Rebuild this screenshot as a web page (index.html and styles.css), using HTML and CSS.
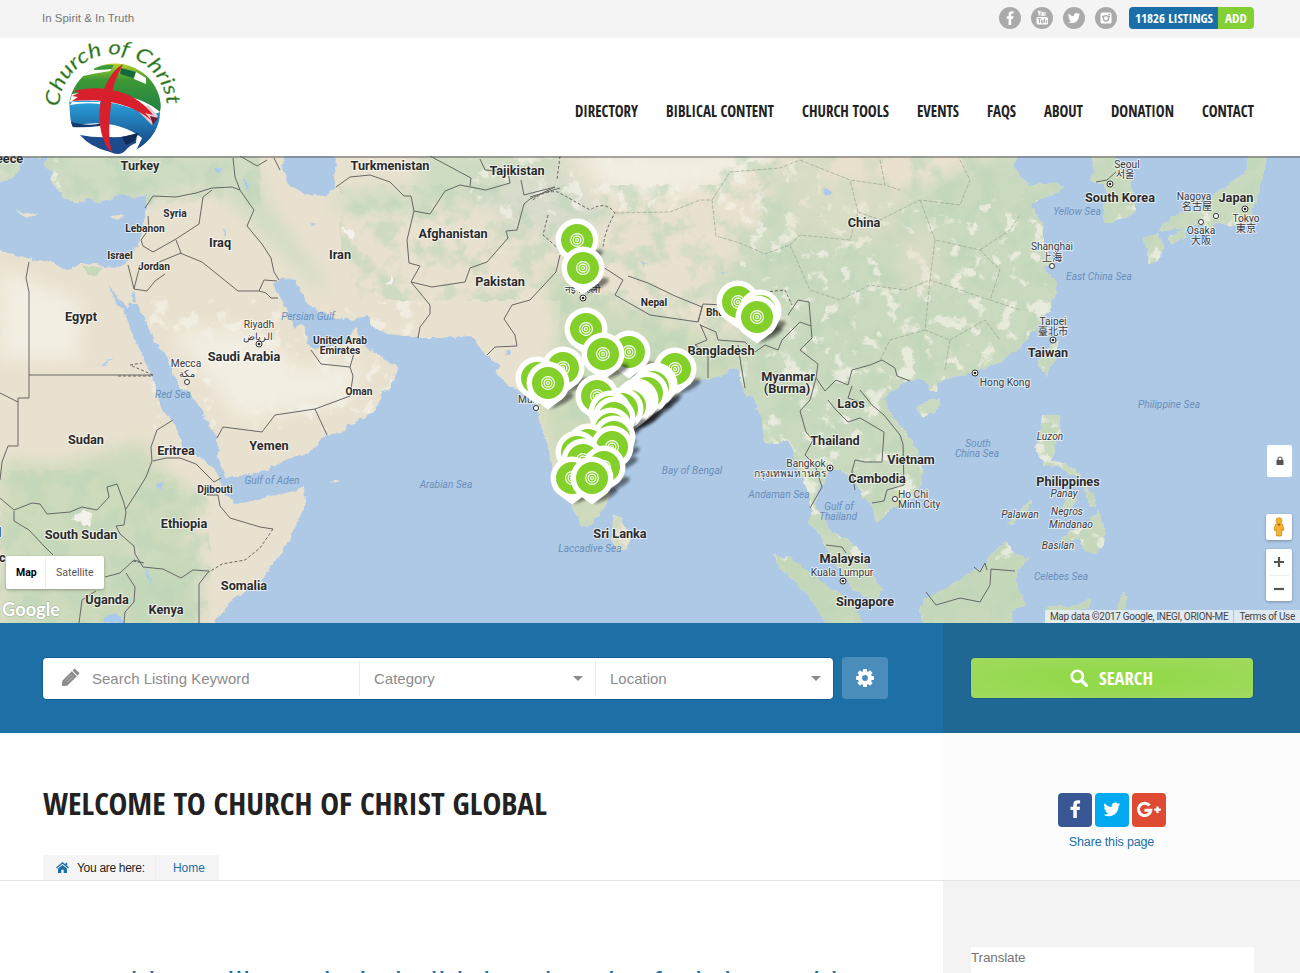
FILE: index.html
```html
<!DOCTYPE html>
<html lang="en">
<head>
<meta charset="utf-8">
<title>Church of Christ Global</title>
<link rel="stylesheet" href="styles.css">
</head>
<body>
<div class="topbar">
  <span class="tagline">In Spirit &amp; In Truth</span>
  <div class="topbar-right">
    <a class="social"><svg viewBox="0 0 22 22"><path d="M12.2 18v-6.3h2l.4-2.5h-2.4V7.8c0-.8.3-1.2 1.2-1.2h1.2V4.3c-3.2-.5-5 .4-5 3v1.9H7.700v2.500h1.900V18z"/></svg></a>
    <a class="social"><svg viewBox="0 0 22 22"><path d="M7 3.500l1.200 3v2.300M9.400 3.500L8.200 6.500M14 5v3.700M12.200 5v3.300h1.800" fill="none" stroke="#fff" stroke-width="1.100"/><rect x="10" y="5" width="1.500" height="3.800" rx=".7" fill="none" stroke="#fff"/><rect x="5.500" y="10" width="11.500" height="7.500" rx="1.500"/><path d="M7 11.700h3M8.500 11.700V16M10.500 12.700V16h1.500v-3.300M13.500 11.500V16M15.500 13v3" fill="none" stroke="#aaa"/></svg></a>
    <a class="social"><svg viewBox="0 0 22 22"><use href="#bird" transform="translate(4.800 4.800) scale(.52)"/></svg></a>
    <a class="social"><svg viewBox="0 0 22 22"><rect x="5.500" y="5.500" width="11" height="11" rx="1.500"/><path d="M7 9.500h2M13 9.500h2M13.500 7.300h1.800" stroke="#aaa" stroke-width="1.300"/><circle cx="11" cy="11.300" r="2.700" fill="#fff" stroke="#aaa" stroke-width="1.300"/></svg></a>
    <div class="pill">
      <a class="pill-count"><svg class="cond" width="79" height="22"><text x="0" y="15.500" textLength="78" lengthAdjust="spacingAndGlyphs">11826 LISTINGS</text></svg></a>
      <a class="pill-add"><svg class="cond" width="23" height="22"><text x="0" y="15.500" textLength="22" lengthAdjust="spacingAndGlyphs">ADD</text></svg></a>
    </div>
  </div>
</div>

<header class="header">
  <svg class="logo" viewBox="40 38 144 118" width="144" height="118">
    <defs>
      <clipPath id="globe"><ellipse cx="115" cy="109" rx="46" ry="45.500"/></clipPath>
      <linearGradient id="lg" x1="0" y1="0" x2="0" y2="1"><stop offset="0" stop-color="#c4d82b"/><stop offset=".35" stop-color="#3f9a35"/><stop offset="1" stop-color="#1f7f45"/></linearGradient>
      <linearGradient id="lb" x1="0" y1="0" x2="0" y2="1"><stop offset="0" stop-color="#2ba3dd"/><stop offset="1" stop-color="#153f7c"/></linearGradient>
      <path id="arcL" d="M59 107A54 55 0 0 1 167 112V130"/>
    </defs>
    <g clip-path="url(#globe)">
      <path d="M69 105C66 70 92 60 115 62C150 64 165 90 160 112C145 98 110 88 72 94z" fill="url(#lg)"/>
      <path d="M90 69Q100 64 114 66L110 71Q96 73 78 77z" fill="#fff"/>
      <path d="M94 68Q104 64 114 65L112 69Q104 70 94 70z" fill="#3c9a3a"/>
      <path d="M121 68L136 72L133 78L120 74z" fill="#14693c"/><path d="M136 72L146 78V84L134 79z" fill="#fff"/>
      <path d="M69 102Q110 96 150 116L160 112Q160 135 136 151L142 138Q115 117 71 126z" fill="url(#lb)"/>
      <path d="M71 122Q90 127 102 123L100 126Q84 128 72 127z" fill="#163a6c"/>
      <path d="M72 102L100 102V104Q85 102 70 105z" fill="#fff"/>
      <path d="M80 135Q95 138 110 137Q124 138 137 133L136 143Q130 145 126 150Q120 157 110 152Q90 147 80 135z" fill="#1c4a8b"/>
      <path d="M122 137L139 133L134 141L126 145z" fill="#102b55"/>
      <path d="M148 105L158 116L152 125L139 112z" fill="#eac9cd"/><path d="M150 116L158 118L153 125z" fill="#6b1f33"/>
    </g>
    <path d="M123 64C115 80 111 90 111 104C109 125 108 139 112 152C101 145 97 117 101 101C104 85 112 70 123 64z" fill="#d81f2c"/>
    <path d="M74 91C100 84 135 90 153 115L145 113L154 123C135 104 104 98 72 101L78 97L72 96L79 93z" fill="#d81f2c"/>
    <text class="logo-text"><textPath href="#arcL" textLength="164" lengthAdjust="spacingAndGlyphs">Church of Christ</textPath></text>
  </svg>
  <nav class="nav">
    <a><svg class="cond" width="63" height="22"><text x="0" y="16" textLength="63" lengthAdjust="spacingAndGlyphs">DIRECTORY</text></svg></a>
    <a><svg class="cond" width="108" height="22"><text x="0" y="16" textLength="108" lengthAdjust="spacingAndGlyphs">BIBLICAL CONTENT</text></svg></a>
    <a><svg class="cond" width="87" height="22"><text x="0" y="16" textLength="87" lengthAdjust="spacingAndGlyphs">CHURCH TOOLS</text></svg></a>
    <a><svg class="cond" width="42" height="22"><text x="0" y="16" textLength="42" lengthAdjust="spacingAndGlyphs">EVENTS</text></svg></a>
    <a><svg class="cond" width="29" height="22"><text x="0" y="16" textLength="29" lengthAdjust="spacingAndGlyphs">FAQS</text></svg></a>
    <a><svg class="cond" width="39" height="22"><text x="0" y="16" textLength="39" lengthAdjust="spacingAndGlyphs">ABOUT</text></svg></a>
    <a><svg class="cond" width="63" height="22"><text x="0" y="16" textLength="63" lengthAdjust="spacingAndGlyphs">DONATION</text></svg></a>
    <a><svg class="cond" width="52" height="22"><text x="0" y="16" textLength="52" lengthAdjust="spacingAndGlyphs">CONTACT</text></svg></a>
  </nav>
</header>

<section class="map">
<svg class="map-canvas" viewBox="0 156 1300 467" width="1300" height="467">
  <defs>
    <path id="bird" d="M24 4.600c-.9.400-1.800.7-2.800.8 1-.6 1.800-1.600 2.200-2.700-1 .6-2 1-3.100 1.200a4.900 4.900 0 0 0-8.400 4.500C7.700 8.200 4.100 6.300 1.700 3.100a4.900 4.900 0 0 0 1.500 6.600c-.8 0-1.600-.2-2.200-.6v.1c0 2.400 1.700 4.400 3.900 4.800-.7.200-1.500.2-2.200.1.600 2 2.400 3.400 4.600 3.400A9.900 9.900 0 0 1 0 19.500 13.900 13.900 0 0 0 7.500 21.700c9.100 0 14.300-7.700 14-14.600 1-.7 1.800-1.600 2.500-2.500z"/>
    <g id="pin">
      <path d="M1 26L18 10Q28 9 25 14Q17 22 1 26z" fill="#111" opacity=".5" filter="url(#soft)"/>
      <path d="M0 26.500L-15 15.500A21.500 21.500 0 1 1 15 15.500z" fill="#fff"/>
      <circle r="16" fill="#84d02a"/>
      <g fill="none" stroke="#fff" stroke-width="1.100"><circle r="6.400"/><circle r="3.900"/><circle r="1.500"/></g>
    </g>
    <filter id="soft" x="-50%" y="-50%" width="200%" height="200%"><feGaussianBlur stdDeviation="1.500"/></filter>
    <filter id="blur"><feGaussianBlur stdDeviation="9"/></filter>
    <filter id="rough"><feTurbulence type="fractalNoise" baseFrequency=".14" numOctaves="3" seed="4"/><feDisplacementMap in="SourceGraphic" scale="6" xChannelSelector="R" yChannelSelector="G"/></filter>
    <filter id="mottle" x="0" y="0" width="100%" height="100%" color-interpolation-filters="sRGB"><feTurbulence type="fractalNoise" baseFrequency=".045" numOctaves="4" seed="7"/><feColorMatrix values="0 0 0 0 .75  0 0 0 0 .84  0 0 0 0 .73  5 0 0 0 -2.300" result="n"/><feComposite in="n" in2="SourceAlpha" operator="in"/></filter>
    <filter id="pale" x="0" y="0" width="100%" height="100%" color-interpolation-filters="sRGB"><feTurbulence type="fractalNoise" baseFrequency=".06" numOctaves="4" seed="21"/><feColorMatrix values="0 0 0 0 .95  0 0 0 0 .94  0 0 0 0 .90  9 0 0 0 -5.200" result="n"/><feComposite in="n" in2="SourceAlpha" operator="in"/></filter>
    <clipPath id="land"><path id="landshape" d="M-12 150H283L282 170L290 185L305 194L325 196L335 189L334 176L337 165L331 150H1020L1012 168L1020 176L1028 185L1045 183L1063 185L1060 191L1045 197L1030 205L1037 215L1044 225L1043 240L1047 252L1055 262L1043 268L1055 280L1057 292L1048 312L1033 332L1020 347L1000 362L985 368L960 376L937 381L936 392L930 390L928 382L917 379L903 383L890 392L885 399L889 412L902 428L916 447L922 463L922 483L913 497L893 507L877 523L875 513L871 503L863 497L857 485L850 478L840 470L830 468L825 480L818 490L815 503L822 515L828 528L838 536L848 540L857 548L864 560L872 575L882 590L876 601L865 597L850 586L838 567L827 550L820 533L808 523L811 510L807 490L797 467L793 450L787 439L777 444L765 443L762 422L755 400L743 390L741 376L735 367L722 375L708 379L695 382L683 390L670 400L655 412L640 425L625 433L614 440L612 455L614 470L611 490L607 503L600 514L592 523L583 527L575 513L571 500L562 485L553 467L547 445L539 420L535 400L533 388L520 391L508 386L496 372L500 366L487 356L480 347L470 336L440 338L417 338L390 334L374 328L367 316L352 320L336 319L318 311L305 300L295 280L283 278L273 285L280 298L288 312L295 329L302 324L306 330L307 344L312 348L327 347L342 345L354 331L357 327L359 335L366 347L381 356L398 368L389 389L382 393L376 409L366 417L351 424L345 431L320 438L317 447L287 461L262 471L240 477L225 477L218 457L217 438L209 425L200 407L190 393L178 385L172 370L168 358L155 342L145 321L137 304L130 304L128 308L119 299L108 283L115 300L125 314L136 343L145 361L153 378L158 397L161 409L174 422L178 432L183 446L201 458L216 471L221 484L226 494L234 503L250 502L267 497L290 492L305 487L306 502L297 525L283 550L260 583L233 600L208 630H-12V244L10 254L28 258L48 262L70 270L80 264L97 263L105 267L122 266L130 261L139 240L143 225L147 209L146 195L132 198L120 195L110 199L97 203L88 198L75 203L65 198L56 188L50 180L54 173L45 166L47 156L35 158L20 156L18 172L10 180L-12 182zM1090 150L1095 170L1090 180L1104 184L1108 196L1103 210L1104 224L1120 220L1135 213L1135 195L1129 180L1116 165L1114 150zM1250 150L1245 173L1228 186L1214 195L1206 208L1182 212L1163 224L1158 233L1180 229L1202 225L1211 230L1217 222L1230 226L1250 219L1257 200L1262 180L1269 150zM1143 238L1158 234L1164 246L1158 262L1147 264L1149 250zM1169 236L1186 228L1185 236L1171 246zM1051 344L1060 340L1055 360L1045 376L1038 362zM918 405L930 400L941 399L936 411L923 417L917 412zM1042 415L1060 416L1060 431L1054 447L1053 460L1065 464L1082 474L1080 479L1059 467L1046 466L1036 450L1040 436zM1084 485L1093 494L1096 508L1088 505zM1071 491L1077 500L1068 515L1061 510zM1060 543L1069 530L1086 528L1098 510L1105 528L1104 544L1095 554L1082 549L1079 538zM1031 500L1033 503L1012 524L1008 523zM920 607L925 598L945 590L965 575L985 565L995 550L1005 540L1013 553L1029 558L1016 570L1018 590L1026 605L1012 611L1012 630H923zM773 555L790 558L808 571L822 583L842 594L856 607L864 630H829L812 600L795 582L780 568zM613 514L622 519L631 536L628 548L618 552L612 541zM1044 630L1047 606L1070 607L1091 598L1088 608L1060 613L1055 630zM1115 610L1125 590L1128 605L1120 615zM110 216L124 215L118 220zM13 211L27 213L41 215L27 217zM330 481L341 480L335 483z"/></clipPath>
  </defs>
  <rect y="156" width="1300" height="467" fill="#adc9e6"/>
  <g filter="url(#rough)">
  <g clip-path="url(#land)">
    <rect x="-12" y="148" width="1324" height="484" fill="#e9e1cf"/>
    <g filter="url(#blur)">
      <path d="M0 150H250L265 200L300 250L330 290L320 290L280 250L240 210L210 185L140 205H0zM360 188L420 190L420 150H480L560 150L570 190L560 215L500 215L470 200L400 215L320 205z" fill="#cedcc2"/>
      <path d="M0 460L60 465L145 440L160 470L205 500L180 560L130 545L140 640H0zM540 260L600 300L690 330L780 340L760 400L620 470L600 530H570L535 400L560 330z" fill="#cddabb"/>
      <path d="M780 165L900 200L1000 150H1280V640H740V340L800 310L700 290L760 240z" fill="#cadabf"/>
      <path d="M460 190L570 170L610 220L560 240L500 220z" fill="#d9dccd"/>
      <path d="M580 150H700L790 150L720 185L640 200L600 185zM0 270L80 300V360H0zM170 330L250 330L300 370L360 360L350 400L240 420z" fill="#f2eee2"/>
      <path d="M120 560L200 550V623H120zM900 530H1110V623H900zM770 550H870V623H770z" fill="#c6d8ba"/>
    </g>
    <path d="M80 266H102L97 277L90 274z" fill="#c6dabb"/>
    <path d="M340 185H720V300H340zM720 150H1280V630H560V300H720zM0 150H260V205H0zM0 470H160L210 500V630H0z" filter="url(#mottle)" opacity=".6"/>
    <path d="M150 300H420V430H150zM560 150H820V210H560zM740 200H1280V560H740zM470 150H570V220H470zM0 150H60V200H0z" filter="url(#pale)" opacity=".75"/>
    <path d="M790 156H895V240H790zM900 230H940V290H900z" fill="#e8dfcb" opacity=".5" filter="url(#blur)"/>
    <g fill="#a9c9f0">
      <path d="M222 228l4 7-3 1zM312 223l5 1-4 3zM243 176l6 10-3 2zM214 170l10-4-5 6zM824 188l8 4-7 4zM156 485l6-2-1 5zM145 568l5 8 2 10-5-9zM105 617l12-4 8 10h-20zM505 350l6 2-4 4zM640 262l8 1-4 2zM723 272l5-1-4 3zM101 365l12-8-8 8z"/>
      <path d="M131 302L134 289L136 303z"/>
    </g>
    <path d="M69 519l2 1 12-11 9 4-3 14-8-4zM340 226l16 7-4 7-8-9zM386 285l7-12v10z" fill="#f3f1e9"/>
  </g>
  </g>
  <g class="border">
    <path d="M29 262L26 278L29 292V375H153M29 375V398H18V446H8L2 462L0 480M0 393L18 402M0 498L14 510L32 503L40 504L47 514L70 512L82 507L97 510L109 497L107 487L117 484L124 503L126 512L124 525L116 526L120 534L134 546L135 554L143 567L163 569L181 578L193 570L209 571L199 584V623M126 509L135 495L146 477L152 461L151 447L157 430L173 420M153 461L166 458L180 458L196 464L214 482L221 478M214 489L207 495H218L220 506L230 518L260 527L273 529M14 511V521L29 530L43 545L53 555M105 577L120 573L134 560L144 563M126 573L135 587L134 602L125 612L124 623M79 623L82 600L96 591"/>
    <path d="M145 208L153 196L176 197L196 193L212 188L232 187L240 190L235 177L233 158M212 190L203 197L199 224L176 239L153 252L143 246L141 240L149 229L148 216M240 190L251 206L254 210L247 226L262 244L271 258L274 272L279 280M176 240L181 253L159 262M180 253L202 262L238 291L259 291L264 280L277 281M259 291L266 293L271 298H278M134 289L128 265M134 289L140 265M134 289L147 291L155 281L165 274"/>
    <path d="M217 438L223 427L262 432L275 415L315 409L350 396L353 376L350 367L321 364L311 350M315 409L327 435M350 367L355 350M336 187L350 177L370 175L390 182L404 196H411L414 211L407 240L409 263L420 266L411 282L430 305V314L420 327L418 338M411 282L432 287L465 282L470 268L487 262L508 238L506 231L517 230L524 204L530 199L555 187L524 195L521 180M414 211L430 214L445 191L460 185L486 190L510 183L508 172L485 170L480 159M430 156L471 178M470 186L471 178M530 197L560 188M274 158L280 170M240 156L257 166L267 160"/>
    <path d="M487 355L495 347L517 346L515 335L504 319L512 305L530 300L556 272L560 255M603 267L623 280L615 295L650 315L698 322L702 307L675 296L648 283L628 276M698 322L703 304L725 305M700 324L707 340L695 345L708 354L708 378M700 325L716 332L718 340L745 342L755 352L765 345L778 350L782 340L800 322L811 326L809 302L798 300L788 315M745 388L741 365L738 345M811 326L812 338L800 350L818 364L816 378L825 391L836 380L848 385L852 370L870 365L882 360L895 368L897 376L910 381M816 378L810 400L800 411L806 432L813 440L805 455L815 465L822 487L810 508M828 400L836 410L848 422L860 418L884 432L882 462L865 462L855 460L852 471L855 490M860 390L872 405L884 415L900 435L903 444M903 444L904 485L887 490L884 501L872 503M852 386L848 398L860 402M826 545L842 547L846 553M926 592L936 605L960 598L980 602L990 585L991 569L1015 571M974 567L980 572L985 563L987 570M1096 182L1107 180L1116 172"/>
  </g>
  <g class="border dashed">
    <path d="M153 375L130 365L142 363M118 376H153M273 529L260 548L245 560L222 564L209 572M533 200Q545 190 558 192L590 210Q605 200 615 213Q605 230 603 247M548 215L543 235L560 250M560 156L557 180M133 561L143 563M765 292L785 290L792 305"/>
  </g>
  <g class="border prov">
    <path d="M615 213L670 212L700 200H712L716 236L740 243L765 254L790 245M712 200L730 172L780 168L800 160M790 245L800 235L850 240L858 212L850 180M790 245L810 290L840 300L870 285L905 290L930 280M858 212L880 220L920 200L960 205L970 180L960 160M920 200L935 240L980 250L1000 270L990 300L1020 310M930 280L925 330L950 340L985 320L1000 340M935 240L930 280L960 290L990 300M950 340L945 370M925 330L890 340L880 360M980 250L1010 230L1020 215M880 160L885 185L900 190M800 160L850 180L885 185"/>
  </g>
  <g class="country">
    <text x="-4" y="163" class="start">eece</text><text x="140" y="170">Turkey</text><text x="390" y="170">Turkmenistan</text><text x="517" y="175">Tajikistan</text>
    <text x="453" y="238">Afghanistan</text><text x="220" y="247">Iraq</text><text x="340" y="259">Iran</text><text x="500" y="286">Pakistan</text><text x="81" y="321">Egypt</text><text x="244" y="361">Saudi Arabia</text>
    <text x="864" y="227">China</text><text x="1120" y="202">South Korea</text><text x="1236" y="202">Japan</text><text x="721" y="355">Bangladesh</text><text x="788" y="381">Myanmar</text><text x="787" y="393">(Burma)</text>
    <text x="1048" y="357">Taiwan</text><text x="851" y="408">Laos</text><text x="835" y="445">Thailand</text><text x="911" y="464">Vietnam</text><text x="877" y="483">Cambodia</text><text x="1068" y="486">Philippines</text>
    <text x="620" y="538">Sri Lanka</text><text x="845" y="563">Malaysia</text><text x="865" y="606">Singapore</text><text x="86" y="444">Sudan</text><text x="269" y="450">Yemen</text><text x="176" y="455">Eritrea</text><text x="184" y="528">Ethiopia</text>
    <text x="81" y="539">South Sudan</text><text x="244" y="590">Somalia</text><text x="107" y="604">Uganda</text><text x="166" y="614">Kenya</text><text x="-2" y="537" class="start">l</text><text x="-1" y="562" class="start">c</text>
  </g>
  <g class="country small">
    <text x="175" y="217">Syria</text><text x="145" y="232">Lebanon</text><text x="120" y="259">Israel</text><text x="154" y="270">Jordan</text><text x="340" y="344">United Arab</text><text x="340" y="354">Emirates</text>
    <text x="359" y="395">Oman</text><text x="215" y="493">Djibouti</text><text x="654" y="306">Nepal</text><text x="706" y="316" class="start">Bhutan</text>
  </g>
  <g class="city">
    <text x="259" y="328">Riyadh</text><text x="258" y="340" class="ar">الرياض</text><text x="186" y="367">Mecca</text><text x="187" y="377" class="ar">مكة</text>
    <text x="1127" y="168">Seoul</text><text x="1125" y="178">서울</text><text x="1194" y="200">Nagoya</text><text x="1197" y="210">名古屋</text><text x="1246" y="222">Tokyo</text><text x="1246" y="232">東京</text><text x="1201" y="234">Osaka</text><text x="1201" y="244">大阪</text>
    <text x="1052" y="250">Shanghai</text><text x="1052" y="261">上海</text><text x="1053" y="325">Taipei</text><text x="1053" y="335">臺北市</text><text x="1005" y="386">Hong Kong</text><text x="806" y="467">Bangkok</text><text x="790" y="477">กรุงเทพมหานคร</text>
    <text x="898" y="498" class="start">Ho Chi</text><text x="898" y="508" class="start">Minh City</text><text x="842" y="576">Kuala Lumpur</text><text x="518" y="403" class="start">Mumbai</text><text x="565" y="293" class="start">नई दिल्ली</text>
  </g>
  <g class="city italic"><text x="1050" y="440">Luzon</text><text x="1064" y="497">Panay</text><text x="1067" y="515">Negros</text><text x="1071" y="528">Mindanao</text><text x="1058" y="549">Basilan</text><text x="1020" y="518">Palawan</text></g>
  <g class="sea">
    <text x="308" y="320">Persian Gulf</text><text x="173" y="398">Red Sea</text><text x="272" y="484">Gulf of Aden</text><text x="446" y="488">Arabian Sea</text><text x="692" y="474">Bay of Bengal</text><text x="779" y="498">Andaman Sea</text><text x="839" y="510">Gulf of</text><text x="838" y="520">Thailand</text>
    <text x="590" y="552">Laccadive Sea</text><text x="1077" y="215">Yellow Sea</text><text x="1099" y="280">East China Sea</text><text x="1169" y="408">Philippine Sea</text><text x="978" y="447">South</text><text x="977" y="457">China Sea</text><text x="1061" y="580">Celebes Sea</text>
  </g>
  <g class="dot"><circle cx="187" cy="382" r="2.500"/><circle cx="1052" cy="266" r="2.500"/><circle cx="1201" cy="222" r="2.500"/><circle cx="1216" cy="216" r="2.500"/><circle cx="895" cy="499" r="2.500"/><circle cx="536" cy="408" r="2.500"/>
    <circle cx="259" cy="344" r="3"/><circle cx="1110" cy="184" r="3"/><circle cx="1245" cy="209" r="3"/><circle cx="1053" cy="340" r="3"/><circle cx="975" cy="373" r="3"/><circle cx="830" cy="468" r="3"/><circle cx="843" cy="581" r="3"/><circle cx="583" cy="298" r="3"/></g>
  <g fill="#222"><circle cx="259" cy="344" r="1.300"/><circle cx="1110" cy="184" r="1.300"/><circle cx="1245" cy="209" r="1.300"/><circle cx="1053" cy="340" r="1.300"/><circle cx="975" cy="373" r="1.300"/><circle cx="830" cy="468" r="1.300"/><circle cx="843" cy="581" r="1.300"/><circle cx="583" cy="298" r="1.300"/></g>
  <g>
    <use href="#pin" x="577" y="240"/><use href="#pin" x="583" y="268"/><use href="#pin" x="738" y="302"/><use href="#pin" x="760" y="311"/><use href="#pin" x="757" y="317"/>
    <use href="#pin" x="586" y="329"/><use href="#pin" x="629" y="352"/><use href="#pin" x="603" y="354"/><use href="#pin" x="563" y="368"/><use href="#pin" x="675" y="369"/><use href="#pin" x="537" y="378"/><use href="#pin" x="548" y="383"/>
    <use href="#pin" x="656" y="384"/><use href="#pin" x="653" y="387"/><use href="#pin" x="647" y="393"/>
    <use href="#pin" x="597" y="396"/><use href="#pin" x="637" y="400"/><use href="#pin" x="634" y="403"/><use href="#pin" x="630" y="406"/><use href="#pin" x="622" y="409"/><use href="#pin" x="610" y="412"/><use href="#pin" x="614" y="418"/><use href="#pin" x="611" y="429"/>
    <use href="#pin" x="614" y="437"/><use href="#pin" x="588" y="445"/><use href="#pin" x="577" y="452"/><use href="#pin" x="612" y="447"/><use href="#pin" x="583" y="460"/><use href="#pin" x="604" y="467"/><use href="#pin" x="572" y="478"/><use href="#pin" x="592" y="478"/>
  </g>
  <text x="2" y="616" class="google" textLength="58" lengthAdjust="spacingAndGlyphs">Google</text>
</svg>
  <div class="maptype"><span class="on">Map</span><span>Satellite</span></div>
  <div class="ctl lock"><svg width="8" height="10" viewBox="0 0 8 10"><path d="M2 4.500V3a2 2 0 0 1 4 0v1.500" fill="none" stroke="#555" stroke-width="1.200"/><rect x=".5" y="4" width="7" height="5" fill="#555"/></svg></div>
  <div class="ctl pegman"><svg width="14" height="20" viewBox="0 0 14 20"><circle cx="7" cy="3.700" r="3" fill="#f4b32c" stroke="#c98a17" stroke-width=".7"/><path d="M3.500 7h7l1.500 6-1.500.4-.6-1.500L9.500 19h-5l-.4-7.100-.6 1.500L2 13z" fill="#f4b32c" stroke="#c98a17" stroke-width=".7"/><path d="M5.300 7h3.400L7 9.300z" fill="#c5541b"/></svg></div>
  <div class="ctl zoom"><span><svg width="10" height="10"><path d="M5 0v10M0 5h10" stroke="#555" stroke-width="2.200"/></svg></span><span><svg width="10" height="10"><path d="M0 5h10" stroke="#555" stroke-width="2.200"/></svg></span></div>
  <div class="attribution"><span>Map data ©2017 Google, INEGI, ORION-ME</span><span>Terms of Use</span></div>
</section>

<section class="search">
  <div class="search-main">
    <div class="fields">
      <div class="field keyword"><svg width="20" height="20" viewBox="0 0 20 20"><g transform="translate(-1 1) rotate(45 10 10)" fill="#8a8a8a"><path d="M6.500 -1.500h7v3h-7zM6.500 2.500h7V16l-3.500 4-3.500-4z"/><path d="M8.800 4v10M11.200 4v10" stroke="#c4c4c4" stroke-width=".7"/></g></svg><span>Search Listing Keyword</span></div>
      <div class="field category"><span>Category</span><i class="caret"></i></div>
      <div class="field location"><span>Location</span><i class="caret"></i></div>
    </div>
    <a class="gear"><svg width="20" height="20" viewBox="-10 -10 20 20"><g fill="#fff"><circle r="7"/><g id="t"><rect x="-2" y="-9" width="4" height="18" rx=".8"/><rect x="-9" y="-2" width="18" height="4" rx=".8"/></g><use href="#t" transform="rotate(45)"/></g><circle r="2.900" fill="#4a8cba"/></svg></a>
  </div>
  <div class="search-side"><a class="search-btn"><svg width="18" height="18" viewBox="0 0 18 18"><circle cx="7.300" cy="7.300" r="5.600" fill="none" stroke="#fff" stroke-width="2.600"/><path d="M11.500 11.500l5 5" stroke="#fff" stroke-width="3.200" stroke-linecap="round"/></svg><svg class="cond" width="54" height="26"><text x="0" y="20" textLength="54" lengthAdjust="spacingAndGlyphs">SEARCH</text></svg></a></div>
</section>

<section class="title">
  <div class="title-main">
    <h1><svg class="cond" width="504" height="40"><text x="0" y="31" textLength="504" lengthAdjust="spacingAndGlyphs">WELCOME TO CHURCH OF CHRIST GLOBAL</text></svg></h1>
    <div class="crumbs"><span class="here"><svg width="13" height="11" viewBox="0 0 13 11"><path d="M6.500 0L13 5.500l-.8 1L6.500 1.800.8 6.500l-.8-1zM9.500.8h1.700v3L9.500 2.400zM2 6.600l4.500-3.700L11 6.600V11H7.700V7.700H5.300V11H2z" fill="#1d6fa5"/></svg>You are here:</span><a>Home</a></div>
  </div>
  <div class="title-side">
    <div class="share">
      <a class="fb"><svg width="34" height="34" viewBox="0 0 34 34"><path d="M18.800 25v-8h2.800l.5-3.200h-3.300v-1.900c0-1 .5-1.500 1.600-1.500h1.700V7.400c-4.300-.7-6.800.6-6.800 4v2.400h-2.800V17h2.800v8z" fill="#fff"/></svg></a>
      <a class="tw"><svg width="34" height="34" viewBox="0 0 34 34"><use href="#bird" transform="translate(8.500 8) scale(.7)" fill="#fff"/></svg></a>
      <a class="gp"><svg width="34" height="34" viewBox="0 0 34 34"><path d="M17.500 12.500a6.200 6.200 0 1 0 1.300 4.700H12.500" fill="none" stroke="#fff" stroke-width="3"/><path d="M25.500 13.500v6.500M22.200 16.700h6.600" stroke="#fff" stroke-width="2.200"/></svg></a>
    </div>
    <a class="share-label">Share this page</a>
  </div>
</section>

<section class="content">
  <div class="content-main"><p>Would you like to help build the church of Christ and be</p></div>
  <aside class="content-side"><div class="widget">Translate</div></aside>
</section>
</body>
</html>
```
FILE: styles.css
```css
* { box-sizing: border-box; }
body { margin: 0; width: 1300px; height: 973px; overflow: hidden; background: #fff; font-family: "Liberation Sans", Arial, sans-serif; color: #222; }
svg { display: block; }
.cond { overflow: visible; }
.cond text { font-family: "Open Sans Condensed", "Open Sans", sans-serif; font-stretch: 75%; font-weight: 700; fill: currentColor; }

.topbar { height: 38px; padding: 0 46px 2px 42px; background: #f4f4f4; border-bottom: 1px solid #f8f8f8; display: flex; align-items: center; justify-content: space-between; }
.tagline { font-size: 11.500px; color: #777; }
.topbar-right { display: flex; align-items: center; gap: 10px; }
.social { width: 22px; height: 22px; border-radius: 50%; background: #aaa; }
.social svg { fill: #fff; }
.pill { display: flex; height: 22px; margin-left: 2px; border-radius: 4px; overflow: hidden; color: #fff; font-size: 13px; }
.pill-count { width: 89px; padding-left: 6px; background: #1a6fa8; }
.pill-add { width: 36px; padding-left: 7px; background: #84cf33; }

.header { height: 118px; padding: 0 46px 0 40px; display: flex; justify-content: space-between; }
.logo { overflow: visible; }
.logo-text { font: italic 400 20px "Lato", sans-serif; fill: #2b6a35; stroke: #8cc63f; stroke-width: .3px; }
.nav { display: flex; gap: 28px; padding-top: 63px; font-size: 15.500px; color: #222; }

.map { position: relative; height: 467px; overflow: hidden; }
.map-canvas { font-family: Roboto, "Noto Sans CJK SC", "Noto Sans CJK KR", "Noto Sans", sans-serif; }
.map::after { content: ""; position: absolute; inset: 0 0 auto; height: 2px; background: rgba(90, 90, 90, .5); }
.map text { text-anchor: middle; paint-order: stroke; stroke: rgba(255, 255, 255, .65); stroke-width: 2px; stroke-linejoin: round; }
.map text.start { text-anchor: start; }
.country { font-size: 12.700px; font-weight: 700; fill: #2b2b2b; }
.country.small { font-size: 10.200px; }
.city { font-size: 10.200px; fill: #3a3a3a; }
.city.italic { font-style: italic; }
.map .sea text { font-size: 10.200px; font-style: italic; fill: #6a8fbb; stroke: none; }
.border { fill: none; stroke: #676767; stroke-width: 1; stroke-linejoin: round; }
.dashed { stroke-dasharray: 3 2; }
.prov { stroke: #9aa391; stroke-width: .7; stroke-dasharray: 4 1.500; }
.dot { fill: #fff; stroke: #333; stroke-width: 1; }
.map text.google { font: 700 19px "Lato", sans-serif; text-anchor: start; fill: #fff; stroke: rgba(110, 120, 110, .35); stroke-width: 1.500px; }
.maptype { position: absolute; left: 6px; top: 400px; height: 33px; width: 98px; display: flex; align-items: center; background: #fff; border-radius: 2px; box-shadow: 0 1px 3px rgba(0, 0, 0, .3); font: 10.500px Roboto, sans-serif; color: #555; }
.maptype span { height: 33px; line-height: 34px; padding: 0 10px; }
.maptype .on { width: 40px; font-weight: 700; color: #000; border-right: 1px solid #eee; }
.ctl { position: absolute; display: flex; align-items: center; justify-content: center; background: #fff; border-radius: 2px; box-shadow: 0 1px 3px rgba(0, 0, 0, .3); }
.lock { left: 1267px; top: 289px; width: 25px; height: 32px; box-shadow: none; }
.pegman { left: 1266px; top: 358px; width: 26px; height: 26px; }
.zoom { left: 1266px; top: 393px; width: 26px; height: 52px; flex-direction: column; }
.zoom span { width: 20px; height: 26px; display: grid; place-items: center; }
.zoom span + span { border-top: 1px solid #eee; }
.attribution { position: absolute; right: 0; bottom: 0; height: 13px; display: flex; font: 10px/14px Roboto, sans-serif; letter-spacing: -.3px; color: #444; }
.attribution span { background: rgba(240, 243, 246, .75); padding: 0 5px; white-space: nowrap; }
.attribution span + span { margin-left: 1px; }

.search { height: 110px; display: grid; grid-template-columns: 943px 1fr; background: #1d70a6; }
.search-main { display: flex; align-items: center; gap: 9px; padding-left: 43px; }
.fields { width: 790px; height: 41px; display: flex; align-items: center; border-radius: 4px; background: #fff; box-shadow: 0 0 0 1px #135f95; font-size: 15px; color: #8c8c8c; }
.field { height: 35px; display: flex; align-items: center; justify-content: space-between; padding: 0 12px 0 14px; }
.field + .field { border-left: 1px solid #e8e8e8; }
.field.keyword { width: 316px; justify-content: flex-start; gap: 12px; padding-left: 17px; }
.field span { padding-top: 1px; }
.keyword svg { overflow: visible; }
.category { width: 236px; }
.location { width: 238px; }
.caret { border: 5px solid transparent; border-top-color: #8c8c8c; border-bottom: 0; }
.gear { width: 46px; height: 42px; border-radius: 4px; background: #4a8cba; display: grid; place-items: center; }
.search-side { padding: 35px 0 0 28px; background: #1f6893; }
.search-btn { width: 282px; height: 40px; display: flex; align-items: center; justify-content: center; gap: 11px; padding-right: 1px; border-radius: 4px; color: #fff; font-size: 18px; background: radial-gradient(ellipse at center, #93d94c 30%, #a2da60 100%); box-shadow: 0 0 0 1px #1b5f8c; }

.title { height: 148px; display: grid; grid-template-columns: 943px 1fr; border-bottom: 1px solid #e4e4e4; }
.title-main { padding-left: 43px; display: flex; flex-direction: column; justify-content: space-between; }
h1 { margin: 51px 0 0; font-size: 31px; line-height: 1; color: #222; }
.crumbs { display: flex; width: 176px; height: 25px; align-items: center; background: #f5f5f5; font-size: 12px; letter-spacing: -.05px; }
.here { display: flex; align-items: center; gap: 8px; width: 113px; height: 25px; padding-left: 13px; border-right: 1px solid #eee; white-space: nowrap; letter-spacing: -.3px; }
.crumbs a { padding-left: 17px; color: #1d6fa5; }
.title-side { background: #fcfcfc; padding: 60px 0 0 28px; display: flex; flex-direction: column; align-items: center; width: 309px; box-shadow: 48px 0 0 #fcfcfc; }
.share { display: flex; gap: 3px; }
.share a { width: 34px; height: 34px; border-radius: 4px; }
.fb { background: #3a5795; }
.tw { background: #00a9f0; }
.gp { background: #df4a32; }
.share-label { margin-top: 8px; font-size: 12.500px; line-height: 14px; letter-spacing: -.15px; color: #1d6fa5; }

.content { height: 92px; display: grid; grid-template-columns: 943px 1fr; overflow: hidden; }
.content-main p { margin: 85px 0 0 66px; font-size: 30px; line-height: 34px; letter-spacing: 1.200px; white-space: nowrap; color: #1d6fa5; }
.content-side { background: #f3f3f3; padding: 66px 46px 0 28px; }
.widget { height: 40px; background: #fff; font-size: 13.500px; line-height: 22px; letter-spacing: -.15px; color: #777; }
```
